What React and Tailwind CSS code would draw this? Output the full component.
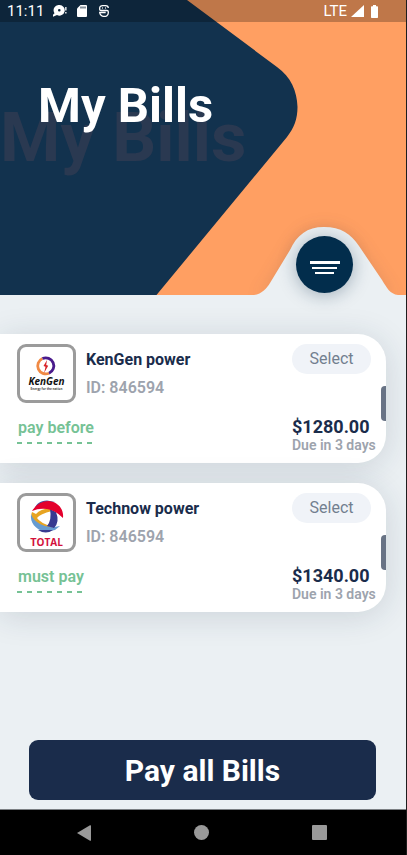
function StatusBar() {
  return (
    <div className="relative flex h-[22px] items-center justify-between bg-black/25 pr-7 pl-[7px] text-white">
      <div className="flex items-center gap-[10px]">
        <span className="w-[36px] text-[15px] leading-5">11:11</span>
        <svg className="h-3 w-[14px]" viewBox="0 0 14 12" fill="currentColor" aria-hidden="true">
          <path fillRule="evenodd" d="M6.300 0a5.300 5.300 0 1 1-2.300 10L0 11.700v-2l1.500-1.500A5.300 5.300 0 0 1 6.300 0Zm0 4a1.300 1.300 0 1 0 0 2.600 1.300 1.300 0 0 0 0-2.600Z" />
          <path d="M12.200 2h1.300v3.500h-1.300zM12.200 7h1.300v1.500h-1.300z" />
        </svg>
        <svg className="h-3 w-[10px]" viewBox="0 0 10 12" aria-hidden="true">
          <path fill="currentColor" d="M3.500 0H9a1 1 0 0 1 1 1v10a1 1 0 0 1-1 1H1a1 1 0 0 1-1-1V3.500Z" />
          <path stroke="#0e253a" d="M4 1.500v2M6 1.500v2M8 1.500v2" />
        </svg>
        <svg className="ml-[2px] h-3 w-[10px]" viewBox="0 0 10 12" fill="none" stroke="currentColor" strokeWidth="1.300" aria-hidden="true">
          <path d="M.7 4.500V3C.7 1.500 2 .7 3.500.7h3C8 .7 9.300 1.500 9.300 3M3 3h.8M6.200 3H7M.7 4.500Q.7 5.500 2 5.500h6q1.300 0 1.300 1.200V8A3.500 3.500 0 0 1 5 11.300 4 4 0 0 1 .7 7.500h6" />
        </svg>
      </div>
      <div className="flex items-center">
        <span className="text-[15px] leading-5">LTE</span>
        <svg className="ml-1 h-3 w-[13px]" viewBox="0 0 13 12" fill="currentColor" aria-hidden="true">
          <path d="M13 0v12H0z" />
        </svg>
        <svg className="ml-[7px] h-[13px] w-[7px]" viewBox="0 0 7 13" fill="currentColor" aria-hidden="true">
          <path d="M2 0h3v1.200h1.300q.7 0 .7.700v10.400q0 .7-.7.700H.7Q0 13 0 12.300V1.900q0-.7.7-.7H2Z" />
        </svg>
      </div>
    </div>
  );
}

function Header() {
  return (
    <header className="relative h-[295px] bg-[#ff9f62]">
      <svg className="absolute top-0 left-0 h-[295px] w-[406px]" viewBox="0 0 406 295" aria-hidden="true">
        <path fill="#12324e" d="M0 0H187L277 67C291 77 297 91 297.500 107C297.500 119 294 128 287 137L156.500 295H0Z" />
      </svg>
      <StatusBar />
      <div className="relative mt-[55px] grid">
        <span aria-hidden="true" className="col-start-1 row-start-1 mt-[21px] text-[69px] leading-[80px] font-bold whitespace-nowrap text-[#2a3951]">My Bills</span>
        <h1 className="col-start-1 row-start-1 ml-[38px] text-[49px] leading-[58px] font-bold text-white">My Bills</h1>
      </div>
      <div className="absolute right-[8px] bottom-0 h-[69px] w-[144px]">
        <svg className="absolute inset-0 h-[69px] w-[144px] drop-shadow-[0_0_8px_rgba(40,50,70,0.12)] [clip-path:inset(-16px_-16px_0_-16px)]" viewBox="0 0 144 69" aria-hidden="true">
          <path fill="#ebf0f3" d="M0 69C8 68 13 62 16 57L36 24C43 9 53 1 70 1C87 1 97 8 105 20L128 54C133 62 136 68 144 69Z" />
        </svg>
        <button type="button" aria-label="Menu" className="absolute top-[10px] left-[42px] flex size-[57px] flex-col items-center gap-[3px] rounded-full bg-[#022d4c] pt-[25px] shadow-[0_2px_18px_rgba(18,50,78,0.35)]">
          <span className="h-[3px] w-[30px] bg-white" />
          <span className="h-[2px] w-[25px] bg-white" />
          <span className="h-[2px] w-[19px] bg-white" />
        </button>
      </div>
    </header>
  );
}

function KenGenLogo() {
  return (
    <svg className="h-[53px] w-[53px]" viewBox="0 0 53 53" role="img" aria-label="KenGen">
      <path fill="none" stroke="#f08a45" strokeWidth="2.800" d="M22.500 11.500A8 8 0 0 0 29 26.200" />
      <path fill="none" stroke="#4a1b8c" strokeWidth="2.800" d="M22.500 11.500A8 8 0 1 1 29 26.200" />
      <path fill="#d8232a" d="m27 13-3.500 6 2 .8-1.300 6 4-7-2-.8Z" />
      <text x="26.500" y="38" textAnchor="middle" fill="#111" className="font-['Open_Sans',sans-serif] text-[10px] font-bold italic">KenGen</text>
      <text x="26.500" y="43" textAnchor="middle" fill="#444" className="font-['Open_Sans',sans-serif] text-[3px] font-bold">Energy for the nation</text>
    </svg>
  );
}

function TotalLogo() {
  return (
    <svg className="h-[53px] w-[53px]" viewBox="0 0 53 53" role="img" aria-label="Total">
      <path fill="#4055a5" d="M14 14C16 8 20 4.500 27 4.500L35 6Q21 7 14 14Z" />
      <path fill="#e7a422" d="M12 16C9 22 16 30 29 34L33 31Q20 27 17 22Q20 18 32 15L31 12Q20 13 16 18Z" />
      <path fill="#669bd0" d="M11 18C10 27 15 33 25 36L35 34L40 30Q29 33 20 28Q13 24 11 18Z" />
      <path fill="#373a90" d="M30 13L36 16Q40 26 34 32L27 30Q32 24 30 13ZM18 34L33 34Q26 39 18 34Z" />
      <path fill="#e4002d" d="M12 15Q18 5 29 5C38 6 44 13 43 22Q35 14 27 13Q19 12 12 15Z" />
      <text x="26.500" y="50" textAnchor="middle" fill="#d3113c" className="font-['Open_Sans',sans-serif] text-[9px] font-bold"><tspan className="text-[11px]">T</tspan><tspan className="text-[10px]">OTAL</tspan></text>
    </svg>
  );
}

function BillCard({ logo, name, id, status, dashes, amount, due }) {
  return (
    <article className="relative mr-5 flex h-[129px] justify-between rounded-r-[28px] bg-white pt-[10px] pr-[10px] pl-[17px] shadow-[0_4px_32px_rgba(27,44,74,0.15)]">
      <div>
        <div className="flex gap-[10px]">
          <div className="size-[59px] overflow-hidden rounded-[9px] border-3 border-[#9b9b9b]">{logo}</div>
          <div className="pt-[6px] text-[16px]">
            <h2 className="leading-5 font-bold text-[#1a2c4b]">{name}</h2>
            <p className="mt-2 leading-5 font-semibold text-[#9da3ad]">{id}</p>
          </div>
        </div>
        <p className="mt-[15px] ml-px text-[16px] leading-5 font-semibold text-[#76c295]">{status}</p>
        <div className="mt-1 flex gap-[5px]">
          {Array.from({ length: dashes }, (_, i) => (
            <span key={i} className="h-[2px] w-[5px] bg-[#76c295]" />
          ))}
        </div>
      </div>
      <div className="w-[84px] whitespace-nowrap">
        <button type="button" className="h-[30px] w-[79px] rounded-full bg-[#f0f3f8] text-[16px] text-[#727f8f]">Select</button>
        <p className="mt-[43px] text-[18px] leading-5 font-bold text-[#1a2c4b]">{amount}</p>
        <p className="text-[14px] leading-[17px] font-semibold text-[#9da3ad]">{due}</p>
      </div>
      <span className="absolute top-[52px] right-0 h-[35px] w-[5px] rounded-l-[4px] bg-[#687385]" />
    </article>
  );
}

function NavBar() {
  return (
    <nav className="flex h-[46px] items-center justify-between border-t border-[#7c8083] bg-black pr-[79px] pl-[77px] text-[#999]">
      <button type="button" aria-label="Back">
        <svg className="h-4 w-[14px]" viewBox="0 0 14 16" fill="currentColor"><path d="M0 8 13 .3q1-.5 1 .7v14q0 1.200-1 .7Z" /></svg>
      </button>
      <button type="button" aria-label="Home" className="size-[15px] rounded-full bg-[#999]" />
      <button type="button" aria-label="Recent apps" className="size-[15px] rounded-[1px] bg-[#999]" />
    </nav>
  );
}

export default function App() {
  return (
    <div className="flex min-h-screen flex-col overflow-x-clip border-r border-[#1d1d1d] bg-[#ebf0f3] font-['Roboto',sans-serif]">
      <Header />
      <main className="flex grow flex-col pt-[39px] pb-[9px]">
        <div className="flex flex-col gap-5">
          <BillCard logo={<KenGenLogo />} name="KenGen power" id="ID: 846594" status="pay before" dashes={8} amount="$1280.00" due="Due in 3 days" />
          <BillCard logo={<TotalLogo />} name="Technow power" id="ID: 846594" status="must pay" dashes={7} amount="$1340.00" due="Due in 3 days" />
        </div>
        <button type="button" className="mr-[30px] ml-[29px] mt-auto h-[60px] rounded-[9px] bg-[#1a2c4b] text-[30px] font-bold text-white">Pay all Bills</button>
      </main>
      <NavBar />
    </div>
  );
}
